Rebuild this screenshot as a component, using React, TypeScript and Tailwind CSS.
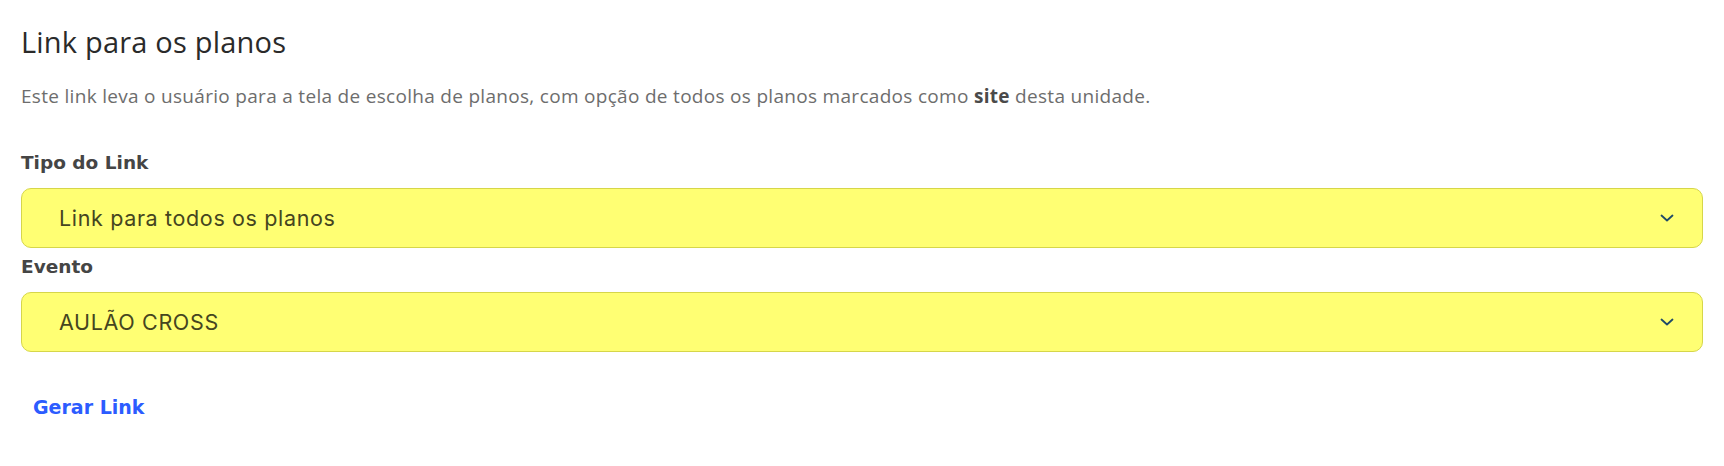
import React from "react";

function Chevron() {
  return (
    <svg width="14" height="8" viewBox="0 0 14 8" fill="none">
      <path d="M1.5 1.5 L7 6.5 L12.5 1.5" stroke="#1f4a68" strokeWidth="1.8" strokeLinecap="round" strokeLinejoin="round" />
    </svg>
  );
}

function Select({ value }: { value: string }) {
  return (
    <div className="flex h-[60px] items-center justify-between rounded-[10px] border border-[#d6d64a] bg-[#ffff73] pl-[37px] pr-[28px]">
      <span className="font-['Inter',sans-serif] text-[21.5px] tracking-[0.03em] text-[#45451f]">{value}</span>
      <Chevron />
    </div>
  );
}

function Label({ children }: { children: React.ReactNode }) {
  return (
    <div className="font-['DejaVu_Sans',sans-serif] text-[18.5px] font-bold leading-[24px] text-[#454545]">
      {children}
    </div>
  );
}

export default function App() {
  return (
    <div className="flex min-h-[466px] w-full flex-col items-stretch bg-white px-[21px] pt-[23px]">
      <h1 className="font-['Open_Sans',sans-serif] text-[29px] leading-[38px] tracking-[0.2px] text-[#2a2a2a]">
        Link para os planos
      </h1>
      <p className="mt-[22px] font-['Open_Sans',sans-serif] text-[19px] leading-[26px] tracking-[0.3px] text-[#6d6d6d]">
        Este link leva o usuário para a tela de escolha de planos, com opção de todos os planos marcados como{" "}
        <b className="font-bold text-[#4a4a4a]">site</b> desta unidade.
      </p>
      <div className="mt-[42px]">
        <Label>Tipo do Link</Label>
      </div>
      <div className="mt-[13px]">
        <Select value="Link para todos os planos" />
      </div>
      <div className="mt-[7px]">
        <Label>Evento</Label>
      </div>
      <div className="mt-[13px]">
        <Select value="AULÃO CROSS" />
      </div>
      <div className="mt-[42px] pl-[12px]">
        <button className="font-['DejaVu_Sans',sans-serif] text-[19px] font-bold leading-[26px] text-[#2c5cff]">
          Gerar Link
        </button>
      </div>
    </div>
  );
}
